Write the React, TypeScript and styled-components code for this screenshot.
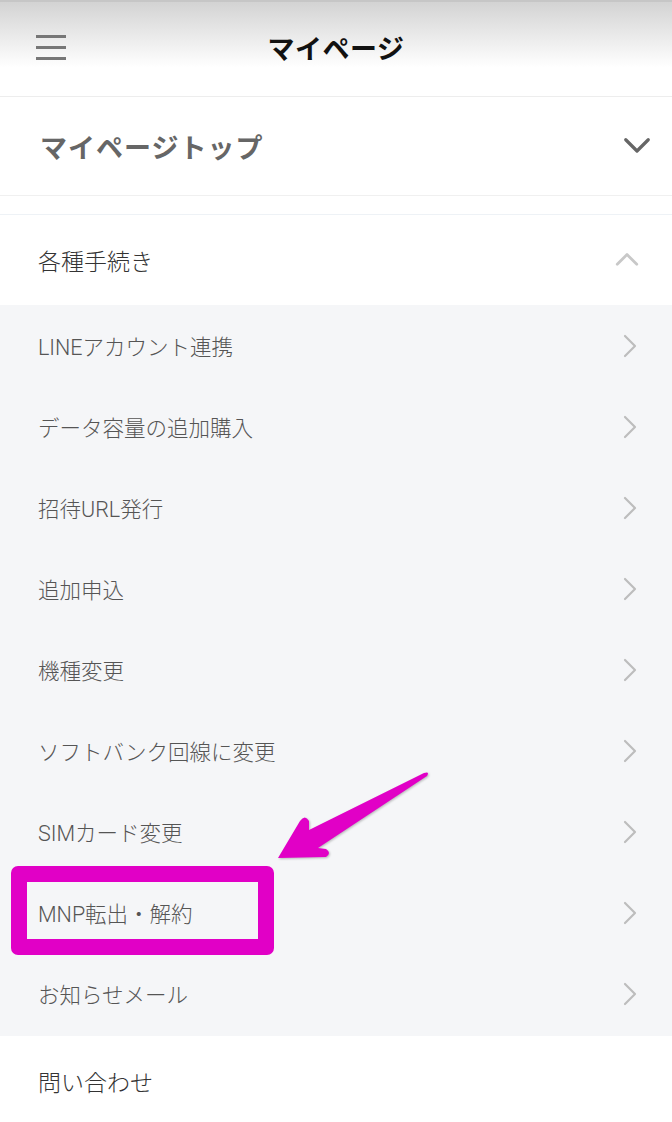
import React from 'react';
import styled, { createGlobalStyle } from 'styled-components';

const GlobalStyle = createGlobalStyle`
  body {
    margin: 0;
    background: #fff;
    font-family: Roboto, "Noto Sans CJK JP", sans-serif;
  }
`;

const items = [
  'LINEアカウント連携',
  'データ容量の追加購入',
  '招待URL発行',
  '追加申込',
  '機種変更',
  'ソフトバンク回線に変更',
  'SIMカード変更',
  'MNP転出・解約',
  'お知らせメール',
];

function Chevron({ dir, color, size, stroke }: { dir: 'up' | 'down' | 'right'; color: string; size: number; stroke: number }) {
  const d =
    dir === 'down' ? 'M3 7 L12 16 L21 7' : dir === 'up' ? 'M3 16 L12 7 L21 16' : 'M8 2 L18 12 L8 22';
  return (
    <svg width={size} height={size} viewBox="0 0 24 24" fill="none">
      <path d={d} stroke={color} strokeWidth={stroke} strokeLinecap="round" strokeLinejoin="round" />
    </svg>
  );
}

export default function App() {
  return (
    <>
      <GlobalStyle />
      <Page>
        <Header>
          <Burger>
            <span />
            <span />
            <span />
          </Burger>
          <Title>マイページ</Title>
          <div />
        </Header>

        <TopRow>
          <TopLabel>マイページトップ</TopLabel>
          <Chevron dir="down" color="#666" size={30} stroke={2.6} />
        </TopRow>

        <Spacer />

        <GroupRow>
          <GroupLabel>各種手続き</GroupLabel>
          <Chevron dir="up" color="#c8c8c8" size={26} stroke={2.6} />
        </GroupRow>

        <List>
          {items.map((t) => (
            <Item key={t}>
              <ItemLabel>{t}</ItemLabel>
              <Chevron dir="right" color="#bdbdbd" size={24} stroke={2.2} />
            </Item>
          ))}
          <Highlight />
          <Arrow viewBox="0 0 180 110" width="180" height="110">
            <path
              d="M18 98 L40 61 Q45 54 49 61 L49 70 L164 13 Q170 11 167 16 L58 88 L66 89 Q72 93 66 97 Z"
              fill="#e100c6"
            />
          </Arrow>
        </List>

        <GroupRow>
          <GroupLabel>問い合わせ</GroupLabel>
        </GroupRow>
      </Page>
    </>
  );
}

const Page = styled.div`
  width: 672px;
  min-height: 1122px;
  background: #fff;
`;

const Header = styled.header`
  height: 97px;
  display: grid;
  grid-template-columns: 1fr auto 1fr;
  align-items: center;
  padding: 0 36px;
  box-sizing: border-box;
  border-top: 2px solid #c6c6c6;
  border-bottom: 1px solid #ededed;
  background: linear-gradient(to bottom, #d3d3d3 0%, #f6f6f6 55%, #fff 70%);
`;

const Burger = styled.div`
  display: flex;
  flex-direction: column;
  gap: 8px;
  width: 30px;
  margin-top: -4px;

  span {
    display: block;
    height: 3px;
    background: #777;
  }
`;

const Title = styled.h1`
  margin: -4px 0 0;
  font-size: 27px;
  font-weight: 700;
  color: #111;
  letter-spacing: 0.5px;
`;

const TopRow = styled.div`
  height: 98px;
  display: flex;
  align-items: center;
  justify-content: space-between;
  padding: 0 20px 0 40px;
  border-bottom: 1px solid #f0f0f0;
`;

const TopLabel = styled.span`
  font-size: 27px;
  font-weight: 700;
  color: #666;
  letter-spacing: 1px;
`;

const Spacer = styled.div`
  height: 18px;
  border-bottom: 1px solid #eef2f6;
`;

const GroupRow = styled.div`
  height: 90px;
  display: flex;
  align-items: center;
  justify-content: space-between;
  padding: 0 32px 0 38px;
`;

const GroupLabel = styled.span`
  font-size: 23px;
  font-weight: 300;
  color: #333;
`;

const List = styled.div`
  position: relative;
  background: #f5f6f8;
  padding-bottom: 2px;
`;

const Item = styled.div`
  height: 81px;
  display: flex;
  align-items: center;
  justify-content: space-between;
  padding: 0 31px 0 38px;
`;

const ItemLabel = styled.span`
  font-size: 21.5px;
  font-weight: 300;
  color: #555;
`;

const Highlight = styled.div`
  position: absolute;
  left: 11px;
  top: 561px;
  width: 263px;
  height: 89px;
  box-sizing: border-box;
  border: 16px solid #e100c6;
  border-radius: 7px;
`;

const Arrow = styled.svg`
  position: absolute;
  left: 260px;
  top: 455px;
  filter: drop-shadow(1px 1px 1px rgba(0, 0, 0, 0.25));
`;
